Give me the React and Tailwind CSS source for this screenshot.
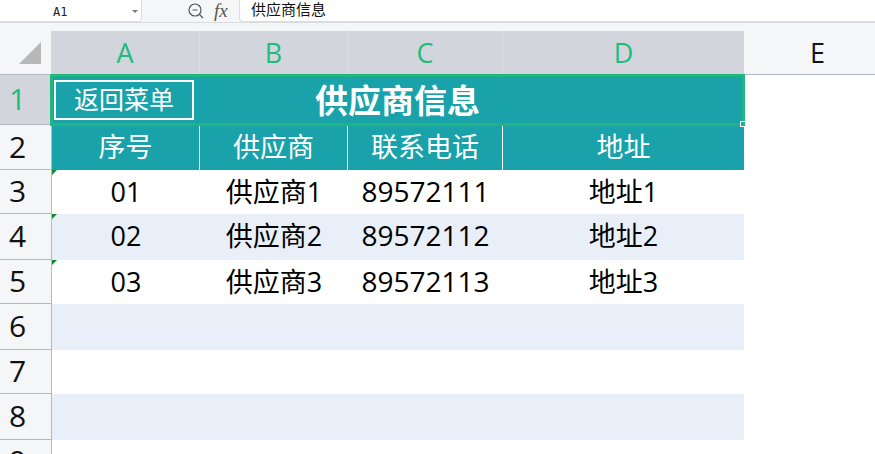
import React from "react";

const colCls = "grid grid-cols-[148px_148px_155px_241px]";

const rows = [
  { n: "3", h: "h-[44px]", bg: "bg-white", cells: ["01", "供应商1", "89572111", "地址1"] },
  { n: "4", h: "h-[46px]", bg: "bg-[#e9eff8]", cells: ["02", "供应商2", "89572112", "地址2"] },
  { n: "5", h: "h-[44px]", bg: "bg-white", cells: ["03", "供应商3", "89572113", "地址3"] },
  { n: "6", h: "h-[46px]", bg: "bg-[#e9eff8]", cells: ["", "", "", ""] },
  { n: "7", h: "h-[44px]", bg: "bg-white", cells: ["", "", "", ""] },
  { n: "8", h: "h-[46px]", bg: "bg-[#e9eff8]", cells: ["", "", "", ""] },
  { n: "9", h: "h-[44px]", bg: "bg-white", cells: ["", "", "", ""] },
];

const RowHead = ({ n, h, active }) => (
  <div
    className={`w-[52px] shrink-0 ${h} flex items-center pl-[9px] pb-[1px] border-r border-b border-[#b4b8c4] text-[30px] leading-none ${
      active ? "bg-[#d2d5dc] text-[#1fbb7d]" : "bg-[#f5f6f8] text-[#111]"
    }`}
  >
    {n}
  </div>
);

export default function App() {
  return (
    <div className="w-[875px] h-[454px] overflow-hidden bg-white font-['Open_Sans','Noto_Sans_CJK_SC',sans-serif]">
      {/* formula bar */}
      <div className="h-[23px] flex bg-[#f5f6f8] border-b border-[#d8dae0]">
        <div className="w-[142px] h-[22px] bg-white border-r border-b border-[#dcdee3] rounded-br-sm flex items-center relative">
          <span className="ml-[53px] mt-[2px] text-[12px] text-[#222] font-['DejaVu_Sans_Mono',monospace]">A1</span>
          <div className="absolute right-[3px] top-[10px] border-x-[3px] border-x-transparent border-t-[3px] border-t-[#777]" />
        </div>
        <div className="w-[97px] flex items-center">
          <svg width="18" height="18" viewBox="0 0 18 18" fill="none" stroke="#555" strokeWidth="1.2" className="ml-[45px]">
            <circle cx="8" cy="8" r="6" />
            <path d="M5.5 8h5M12.5 12.5l3.5 3.5" />
          </svg>
          <span className="ml-[9px] text-[19px] italic text-[#555] font-['Liberation_Serif',serif]">fx</span>
        </div>
        <div className="flex-1 h-[22px] bg-white border-l border-b border-[#dcdee3] rounded-bl-sm flex items-center pl-[11px] pb-[2px] text-[15px] text-[#111]">
          供应商信息
        </div>
      </div>

      {/* column headers */}
      <div className="h-[8px] bg-[#f5f6f8]" />
      <div className="flex h-[44px] bg-[#f5f6f8] border-b border-[#b4b8c4] text-[27px]">
        <div className="w-[51px] shrink-0 flex items-end justify-end pr-[10px] pb-[2px]">
          <svg width="22" height="22" viewBox="0 0 22 22" className="mb-[8px]">
            <path d="M22 0V22H0Z" fill="#b8b8b8" />
          </svg>
        </div>
        <div className="grid grid-cols-[149px_148px_155px_241px] bg-[#d2d5dc] text-[#1fbb7d] text-center">
          <div className="leading-[44px] border-r border-[#dcdee3]">A</div>
          <div className="leading-[44px] border-r border-[#dcdee3]">B</div>
          <div className="leading-[44px] border-r border-[#dcdee3]">C</div>
          <div className="leading-[44px]">D</div>
        </div>
        <div className="flex-1 pl-[16px] text-center leading-[44px] text-[#111]">E</div>
      </div>

      {/* row 1, merged title */}
      <div className="flex">
        <RowHead n="1" h="h-[50px]" active />
        <div className="relative w-[692px] h-[50px] bg-[#19a2aa] flex items-center justify-center">
          <span className="-ml-[1px] text-[33px] font-bold text-white leading-none">供应商信息</span>
          <div className="absolute left-[2px] top-[5px] w-[140px] h-[40px] border-2 border-white flex items-center justify-center text-[25px] text-white">
            返回菜单
          </div>
          {/* selection frame */}
          <div className="absolute -left-[2px] -top-[1px] w-[695px] h-[52px] border-[3px] border-[#1fb77f] z-10" />
          <div className="absolute -right-[2px] -bottom-[2px] w-[6px] h-[6px] bg-[#1fb77f] border border-white z-10" />
        </div>
      </div>

      {/* row 2, table head */}
      <div className="flex">
        <RowHead n="2" h="h-[45px]" />
        <div className={`${colCls} h-[45px] bg-[#19a2aa] text-white text-[27px] text-center`}>
          <div className="leading-[43px] border-r border-white">序号</div>
          <div className="leading-[43px] border-r border-white">供应商</div>
          <div className="leading-[43px] border-r border-white">联系电话</div>
          <div className="leading-[43px]">地址</div>
        </div>
      </div>

      {/* data rows */}
      {rows.map((r) => (
        <div key={r.n} className="flex">
          <RowHead n={r.n} h={r.h} />
          <div className={`${colCls} ${r.h} ${r.bg} text-black text-[27px] text-center`}>
            {r.cells.map((c, i) => (
              <div key={i} className={`relative flex items-center justify-center ${i === 2 ? "text-[28px] pb-[6px]" : "pb-[4px]"}`}>
                {i === 0 && c && (
                  <div className="absolute left-0 top-0 border-t-[5px] border-r-[5px] border-t-[#118a2c] border-r-transparent" />
                )}
                {c}
              </div>
            ))}
          </div>
        </div>
      ))}
    </div>
  );
}
